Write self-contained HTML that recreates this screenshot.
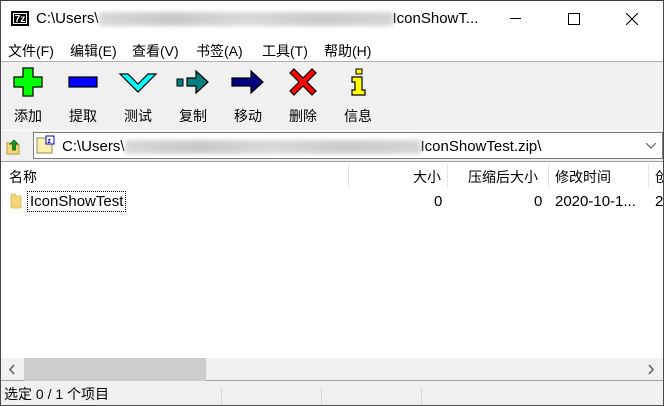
<!DOCTYPE html>
<html><head><meta charset="utf-8"><style>
*{margin:0;padding:0;box-sizing:border-box}
body{width:664px;height:406px;overflow:hidden;background:#f0f0f0;font-family:"Liberation Sans","Noto Sans CJK SC",sans-serif;font-size:14px;color:#000;position:relative}
.abs{position:absolute}
.frame{left:0;top:0;width:664px;height:406px;border:1px solid #4a4a4a;border-top-color:#3a3a3a}
.blur{display:inline-block;width:290px;height:14px;background:linear-gradient(90deg,#d8d8d8,#c9c9c9,#dadada,#cbcbcb,#d6d6d6);filter:blur(2px);vertical-align:middle}
.tb{position:absolute;top:66px;width:50px;text-align:center}
.tb svg{display:block;margin:0 auto}
.tb span{display:block;margin-top:8px;font-size:14px}
.mn{position:absolute;top:42px;line-height:18px;white-space:nowrap}
</style></head><body>
<div class="abs" style="left:0;top:0;width:664px;height:61px;background:#fff"></div>
<div class="abs" style="left:0;top:61px;width:664px;height:1px;background:#b0b0b0"></div>
<!-- title -->
<div class="abs" style="left:11px;top:11px;width:18px;height:15px;background:#000;color:#fff;font:bold 10px 'Liberation Sans';line-height:15px;text-align:center;border:1px solid #000;outline:1px solid #fff;outline-offset:-3px">7z</div>
<div class="abs" style="left:36px;top:9px;font-size:15px;white-space:nowrap;line-height:20px">C:\Users\<span class="blur" style="width:294px"></span>IconShowT...</div>
<div class="abs" style="left:510px;top:18px;width:11px;height:1px;background:#000"></div>
<div class="abs" style="left:568px;top:13px;width:12px;height:12px;border:1px solid #000"></div>
<svg class="abs" style="left:626px;top:13px" width="12" height="12"><path d="M0 0L12 12M12 0L0 12" stroke="#000" stroke-width="1.1"/></svg>
<!-- menu -->
<div class="mn" style="left:8px">文件(F)</div>
<div class="mn" style="left:70px">编辑(E)</div>
<div class="mn" style="left:132px">查看(V)</div>
<div class="mn" style="left:196px">书签(A)</div>
<div class="mn" style="left:262px">工具(T)</div>
<div class="mn" style="left:324px">帮助(H)</div>
<!-- toolbar -->
<div class="tb" style="left:3px"><svg width="32" height="32" viewBox="0 0 32 32"><path d="M11 2h10v9h9v10h-9v9H11v-9H2V11h9z" fill="#00ff00" stroke="#000" stroke-width="1.2"/></svg><span>添加</span></div>
<div class="tb" style="left:58px"><svg width="32" height="32" viewBox="0 0 32 32"><rect x="2" y="11" width="28" height="10" fill="#0000ff" stroke="#000" stroke-width="1.2"/></svg><span>提取</span></div>
<div class="tb" style="left:113px"><svg width="40" height="32" viewBox="0 0 40 32"><path d="M2 8h8l10 10L30 8h8L20 26z" fill="#00ffff" stroke="#000" stroke-width="1.2"/></svg><span>测试</span></div>
<div class="tb" style="left:168px"><svg width="36" height="32" viewBox="0 0 36 32"><rect x="2" y="13" width="6" height="7" fill="#008080" stroke="#000"/><path d="M12 12h9V5l12 11-12 11v-7h-9z" fill="#008080" stroke="#000" stroke-width="1.2"/></svg><span>复制</span></div>
<div class="tb" style="left:223px"><svg width="36" height="32" viewBox="0 0 36 32"><path d="M2 12h19V5l12 11-12 11v-7H2z" fill="#000080" stroke="#000" stroke-width="1.2"/></svg><span>移动</span></div>
<div class="tb" style="left:278px"><svg width="32" height="32" viewBox="0 0 32 32"><path d="M3 7l4-4 9 9 9-9 4 4-9 9 9 9-4 4-9-9-9 9-4-4 9-9z" fill="#ff0000" stroke="#000" stroke-width="1.2"/></svg><span>删除</span></div>
<div class="tb" style="left:333px"><svg width="32" height="32" viewBox="0 0 32 32"><rect x="14" y="3" width="6" height="5" fill="#ffff00" stroke="#000"/><path d="M10 11h10v13h3v5H10v-5h3v-8h-3z" fill="#ffff00" stroke="#000" stroke-width="1.2"/></svg><span>信息</span></div>
<!-- address -->
<div class="abs" style="left:0;top:130px;width:664px;height:1px;background:#fff"></div>
<svg class="abs" style="left:5px;top:137px" width="16" height="18"><path d="M2 6h5l1 2h6v9H2z" fill="#f5d87a" stroke="#b89a3a"/><path d="M9 3l4 4h-2.5v6h-3V7H5z" fill="#1a9a1a" stroke="#0a5a0a" stroke-width=".7"/></svg>
<div class="abs" style="left:33px;top:132px;width:630px;height:27px;background:#fff;border:1px solid #7a7a7a"></div>
<svg class="abs" style="left:36px;top:135px" width="20" height="20"><path d="M1 3h15v15H1z" fill="#faf0b0" stroke="#9a8a50"/><rect x="10" y="1" width="8" height="8" fill="#fff" stroke="#0000cc"/><text x="11.5" y="8" font-size="7" font-weight="bold" fill="#0000cc" font-family="Liberation Sans">z</text></svg>
<div class="abs" style="left:62px;top:137px;font-size:15px;white-space:nowrap;line-height:20px">C:\Users\<span class="blur" style="width:296px"></span>IconShowTest.zip\</div>
<svg class="abs" style="left:646px;top:143px" width="10" height="6"><path d="M0 0l5 5 5-5" fill="none" stroke="#555"/></svg>
<!-- list -->
<div class="abs" style="left:1px;top:161px;width:662px;height:197px;background:#fff;border-top:1px solid #a0a0a0"></div>
<div class="abs" style="left:348px;top:164px;width:1px;height:24px;background:#e5e5e5"></div>
<div class="abs" style="left:447px;top:164px;width:1px;height:24px;background:#e5e5e5"></div>
<div class="abs" style="left:548px;top:164px;width:1px;height:24px;background:#e5e5e5"></div>
<div class="abs" style="left:648px;top:164px;width:1px;height:24px;background:#e5e5e5"></div>
<div class="abs" style="top:167px;left:9px;white-space:nowrap;line-height:20px">名称</div>
<div class="abs" style="top:167px;left:413px;white-space:nowrap;line-height:20px">大小</div>
<div class="abs" style="top:167px;left:468px;white-space:nowrap;line-height:20px">压缩后大小</div>
<div class="abs" style="top:167px;left:555px;white-space:nowrap;line-height:20px">修改时间</div>
<div class="abs" style="top:167px;left:655px;white-space:nowrap;line-height:20px">创</div>
<svg class="abs" style="left:10px;top:193px" width="12" height="16"><path d="M1 1h4l1 2h5v12H1z" fill="#f3d57a" stroke="#d9b650" stroke-width=".8"/></svg>
<div class="abs" style="top:191px;left:27px;padding:0 2px;border:1px dotted #000;line-height:19px;font-size:15px">IconShowTest</div>
<div class="abs" style="top:192px;left:434px;font-size:15px;line-height:20px">0</div>
<div class="abs" style="top:192px;left:534px;font-size:15px;line-height:20px">0</div>
<div class="abs" style="top:192px;left:555px;font-size:15px;line-height:20px;white-space:nowrap">2020-10-1...</div>
<div class="abs" style="top:192px;left:655px;font-size:15px;line-height:20px">2</div>
<!-- scrollbar -->
<div class="abs" style="left:1px;top:358px;width:662px;height:23px;background:#f0f0f0;border-bottom:1px solid #a0a0a0"></div>
<div class="abs" style="left:24px;top:358px;width:182px;height:23px;background:#cdcdcd"></div>
<svg class="abs" style="left:8px;top:364px" width="8" height="11"><path d="M6 1L2 5.5 6 10" fill="none" stroke="#606060" stroke-width="1.6"/></svg>
<svg class="abs" style="left:647px;top:364px" width="8" height="11"><path d="M2 1l4 4.5L2 10" fill="none" stroke="#606060" stroke-width="1.6"/></svg>
<!-- status -->
<div class="abs" style="left:221px;top:388px;width:1px;height:18px;background:#d8d8d8"></div>
<div class="abs" style="left:321px;top:388px;width:1px;height:18px;background:#d8d8d8"></div>
<div class="abs" style="left:421px;top:388px;width:1px;height:18px;background:#d8d8d8"></div>
<div class="abs" style="left:4px;top:384px;font-size:14px;line-height:20px;white-space:nowrap">选定 0 / 1 个项目</div>
<div class="abs frame"></div>
</body></html>
